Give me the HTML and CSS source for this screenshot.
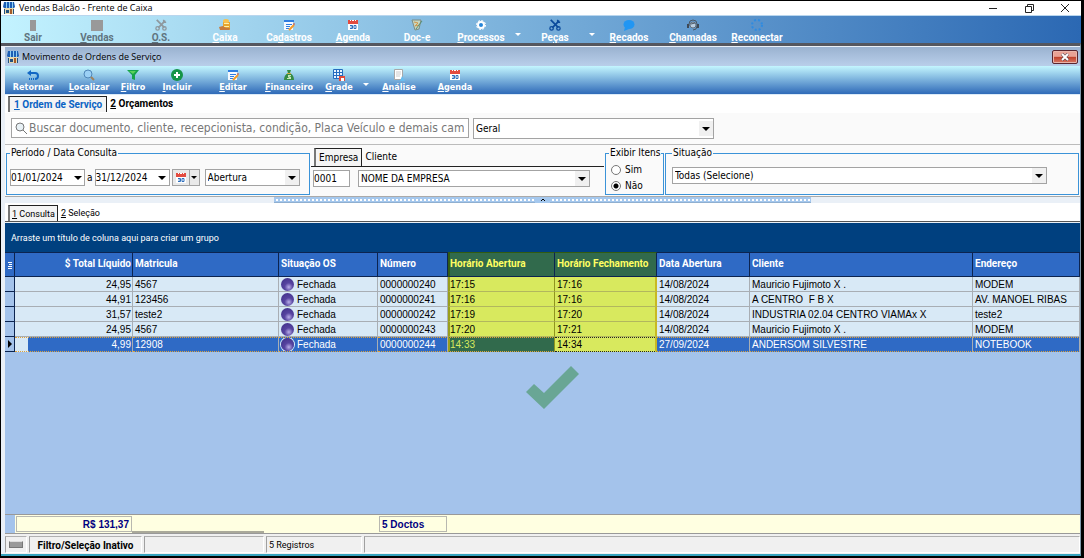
FILE: index.html
```html
<!DOCTYPE html>
<html lang="pt-br">
<head>
  <meta charset="UTF-8">
  <title>Vendas Balcão - Frente de Caixa</title>
  <link rel="stylesheet" href="styles.css">
</head>
<body>
  <svg class="symbols" aria-hidden="true">
    <symbol id="loja" viewBox="0 0 12 12">
      <path fill="#e8d9ae" d="M1 5h10v7H1z"/>
      <path fill="#1d5fb4" d="M1 0h10l1 5-1 1H1L0 5z"/>
      <path fill="#8fd0f5" d="M3 0h1v6H3zM6 0h1v6H6zM9 0h1v6H9z"/>
      <path fill="#23517f" d="M1 7h1v5H1zM10 7h1v5h-1zM3 8h3v3H3z"/>
      <path fill="#a55b2b" d="M7 7h2v5H7z"/>
    </symbol>
    <symbol id="agenda" viewBox="0 0 12 12">
      <path fill="#fff" d="M1 4h10v7H1z"/>
      <path fill="#e34b3f" d="M1 1h10v4H1z"/>
      <path fill="#fff" d="M3 1h1v1H3zM5 1h2v1H5zM8 1h1v1H8z"/>
      <path fill="none" stroke="#2e6fbd" d="M3 6.5h2.5v3H3M3.500 8h2M7 6.500h2v3H7z"/>
    </symbol>
    <symbol id="editar" viewBox="0 0 12 12">
      <path fill="#f5f9ff" d="M1 2h9v9H1z"/>
      <path fill="#2f7de0" d="M1 1h10v2H1zM3 5h6v1H3zM3 7h4v1H3zM3 9h3v1H3z"/>
      <path fill="none" stroke="#f39a28" stroke-width="2" d="M6 11l5-5"/>
      <path fill="#d8443a" d="M10 5l1-1 1 1-1 1z"/>
    </symbol>
    <symbol id="ferramentas" viewBox="0 0 14 14">
      <path fill="none" stroke="currentColor" stroke-width="2" d="M2 1l9 9M12 2l-8 8"/>
      <circle cx="3" cy="11" r="2" fill="none" stroke="currentColor" stroke-width="1.500"/>
      <circle cx="11" cy="11" r="2" fill="none" stroke="currentColor" stroke-width="1.500"/>
      <path fill="none" stroke="currentColor" stroke-width="1.500" d="M10 1v3h3"/>
    </symbol>
  </svg>

  <div class="janela">
    <header class="titulo">
      <svg class="icone"><use href="#loja"/></svg>
      <span>Vendas Balcão - Frente de Caixa</span>
      <div class="controles">
        <button aria-label="Minimizar"><svg viewBox="0 0 10 10"><path d="M1 5.500h8"/></svg></button>
        <button aria-label="Restaurar"><svg viewBox="0 0 10 10"><path d="M1.500 3.500h6v6h-6zM3.500 3V1.500h6v6H8"/></svg></button>
        <button aria-label="Fechar"><svg viewBox="0 0 10 10"><path d="M1 1l8 8M9 1L1 9"/></svg></button>
      </div>
    </header>

    <nav class="menu">
      <button class="apagado"><svg class="icone" viewBox="0 0 12 12"><path fill="#999" d="M3 1h6v11H3z"/></svg><span>Sair</span></button>
      <button class="apagado"><svg class="icone" viewBox="0 0 12 12"><path fill="#999" d="M0 1h12v11H0z"/></svg><span><u>V</u>endas</span></button>
      <button class="apagado"><svg class="icone cinza"><use href="#ferramentas"/></svg><span><u>O</u>.S.</span></button>
      <button><svg class="icone" viewBox="0 0 12 12"><path fill="#e6a52c" d="M4 3h7v8H4z"/><ellipse cx="7" cy="2" rx="3" ry="2" fill="#f7c04c"/><path fill="#fff0a8" d="M5 4h5v1H5zM5 7h5v1H5z"/><path fill="#c77b3b" d="M0 8l4-1 3 2h4l-1 2H1z"/></svg><span><u>C</u>aixa</span></button>
      <button><svg class="icone"><use href="#editar"/></svg><span>Ca<u>d</u>astros</span></button>
      <button><svg class="icone"><use href="#agenda"/></svg><span><u>A</u>genda</span></button>
      <button><svg class="icone" viewBox="0 0 12 12"><path fill="#c8d6c0" stroke="#7d8d84" d="M1 1h9l-2 9-4 1z"/><path fill="none" stroke="#d09849" d="M3 3l4 1-3 3 4-1"/><path fill="none" stroke="#568f70" d="M5 10l6-8"/></svg><span>Doc-e</span></button>
      <button><svg class="icone" viewBox="0 0 12 12"><circle cx="6" cy="6" r="3" fill="#2685d8" stroke="#fff" stroke-width="2"/><circle cx="6" cy="6" r="4.500" fill="none" stroke="#fff" stroke-dasharray="2 1.500"/></svg><span><u>P</u>rocessos</span></button>
      <button class="seta" aria-label="Mais processos"></button>
      <button><svg class="icone azul"><use href="#ferramentas"/></svg><span>Pe<u>ç</u>as</span></button>
      <button class="seta" aria-label="Mais peças"></button>
      <button><svg class="icone" viewBox="0 0 12 12"><ellipse cx="6" cy="5.500" rx="5.500" ry="4.500" fill="#2196f3"/><path fill="#2196f3" d="M2 8l-1 4 5-2z"/></svg><span><u>R</u>ecados</span></button>
      <button><svg class="icone" viewBox="0 0 12 12"><path fill="none" stroke="#4b5662" d="M2 7V5q0-4 4-4t4 4v2q0 4-4 4"/><path fill="#3e4955" d="M0 5h2v4H0zM10 5h2v4h-2z"/><circle cx="6" cy="6" r="3" fill="#b9cee2" stroke="#66727f"/><path stroke="#4b5662" d="M4 5l4-1"/></svg><span><u>C</u>hamadas</span></button>
      <button><svg class="icone" viewBox="0 0 12 12"><circle cx="6" cy="6" r="5" fill="none" stroke="#2f8be0" stroke-width="2" stroke-dasharray="2 2"/></svg><span><u>R</u>econectar</span></button>
    </nav>

    <main class="filha">
      <header class="titulo-filha">
        <svg class="icone"><use href="#loja"/></svg>
        <span>Movimento de Ordens de Serviço</span>
        <button class="fechar" aria-label="Fechar movimento"><svg viewBox="0 0 8 8"><path stroke="#4b3a46" stroke-width="3" d="M1 1l6 6M7 1L1 7"/><path stroke="#fff" stroke-width="2" d="M1 1l6 6M7 1L1 7"/></svg></button>
      </header>

      <nav class="acoes">
        <button><svg class="icone" viewBox="0 0 12 12"><path fill="none" stroke="#1267c4" stroke-width="2" d="M2 4h6q3 0 3 3t-3 3"/><path fill="#1267c4" d="M0 4l4-3v6z"/><path stroke="#1267c4" stroke-width="2" stroke-dasharray="1 1" d="M2 10h6"/></svg><span>Retornar</span></button>
        <button><svg class="icone" viewBox="0 0 12 12"><circle cx="5" cy="5" r="4" fill="#9bd0f5" stroke="#4f86b8"/><path stroke="#a0825c" stroke-width="2" d="M8 8l3 3"/></svg><span><u>L</u>ocalizar</span></button>
        <button class="curto"><svg class="icone" viewBox="0 0 12 12"><path fill="#16a34b" d="M0 1h12L8 6v5l-3-1V6z"/><path fill="#5bd15b" d="M2 2h7L6 5z"/></svg><span><u>F</u>iltro</span></button>
        <button><svg class="icone" viewBox="0 0 12 12"><circle cx="6" cy="6" r="6" fill="#159447"/><path fill="#fff" d="M5 3h2v2h2v2H7v2H5V7H3V5h2z"/></svg><span><u>I</u>ncluir</span></button>
        <button><svg class="icone"><use href="#editar"/></svg><span><u>E</u>ditar</span></button>
        <button><svg class="icone" viewBox="0 0 12 12"><path fill="#348b45" d="M4 1h4L7 4q4 2 4 7H1q0-5 4-7z"/><path fill="#d5a842" d="M4 4h4v1H4z"/><path fill="#c8e8ba" d="M5 6h3v1H6l2 1v2H4V9h2L5 8z"/></svg><span><u>F</u>inanceiro</span></button>
        <button class="medio"><svg class="icone" viewBox="0 0 12 12"><path fill="#e8f4ff" stroke="#246cc0" d="M.5.500h9v9h-9zM3.500.500v9M6.500.500v9M0 3.500h9M0 6.500h9"/><path fill="#e24c3b" d="M6 7h6v5H6z"/><path fill="#fff" d="M8 9h3v3H8z"/></svg><span><u>G</u>rade</span></button>
        <button class="seta" aria-label="Mais opções de grade"></button>
        <button><svg class="icone" viewBox="0 0 12 12"><path fill="#fff" stroke="#a8a8a8" d="M1.500.500h8v10h-8z"/><path stroke="#ccc" d="M3 3h5M3 5h5M3 7h4"/><path fill="#67bdf0" d="M9 7l3 5H7z"/></svg><span><u>A</u>nálise</span></button>
        <button><svg class="icone"><use href="#agenda"/></svg><span><u>A</u>genda</span></button>
      </nav>

      <div class="abas principais">
        <button class="aba ativa"><u>1</u> Ordem de Serviço</button>
        <button class="aba"><u>2</u> Orçamentos</button>
      </div>

      <section class="busca">
        <label class="campo-busca">
          <svg viewBox="0 0 12 12"><circle cx="5" cy="5" r="4"/><path d="M8 8l4 4"/></svg>
          <input type="text" aria-label="Buscar" placeholder="Buscar documento, cliente, recepcionista, condição, Placa Veículo e demais campos">
        </label>
        <select class="combo tipo" aria-label="Tipo de busca"><option>Geral</option></select>
      </section>

      <section class="filtros">
        <fieldset>
          <legend>Período / Data Consulta</legend>
          <div class="linha">
            <div class="data"><input type="text" aria-label="Data inicial" value="01/01/2024"><button class="abrir" aria-label="Abrir data inicial"></button></div>
            <span>a</span>
            <div class="data"><input type="text" aria-label="Data final" value="31/12/2024"><button class="abrir" aria-label="Abrir data final"></button></div>
            <div class="calendario"><button aria-label="Calendário"><svg class="icone"><use href="#agenda"/></svg></button><button class="abrir" aria-label="Períodos"></button></div>
            <select class="combo abertura" aria-label="Tipo de data"><option>Abertura</option></select>
          </div>
        </fieldset>

        <div class="empresa">
          <div class="abas">
            <button class="aba ativa">Empresa</button>
            <button class="aba">Cliente</button>
          </div>
          <div class="linha">
            <input type="text" class="codigo" aria-label="Código da empresa" value="0001">
            <select class="combo nome" aria-label="Empresa"><option>NOME DA EMPRESA</option></select>
          </div>
        </div>

        <fieldset class="exibir">
          <legend>Exibir Itens</legend>
          <label><input type="radio" name="itens"> Sim</label>
          <label><input type="radio" name="itens" checked> Não</label>
        </fieldset>

        <fieldset class="situacao">
          <legend>Situação</legend>
          <select class="combo" aria-label="Situação"><option>Todas (Selecione)</option></select>
        </fieldset>
      </section>

      <div class="divisor"><button aria-label="Recolher filtros"><svg viewBox="0 0 6 4"><path d="M1 3l2-2 2 2"/></svg></button></div>

      <div class="abas consulta">
        <button class="aba ativa"><u>1</u> Consulta</button>
        <button class="aba"><u>2</u> Seleção</button>
      </div>

      <section class="grade">
        <div class="agrupar">Arraste um título de coluna aqui para criar um grupo</div>
        <table>
          <colgroup>
            <col class="c-ind"><col class="c-total"><col class="c-mat"><col class="c-sit"><col class="c-num">
            <col class="c-hab"><col class="c-hfe"><col class="c-data"><col class="c-cli"><col>
          </colgroup>
          <thead>
            <tr>
              <th class="ind"><svg viewBox="0 0 6 8"><path d="M1 1.500h4M2 3.500h3M1 5.500h4M1 7.500h4"/></svg></th>
              <th class="valor">$ Total Líquido</th>
              <th>Matricula</th>
              <th>Situação OS</th>
              <th>Número</th>
              <th class="hora h-ini">Horário Abertura</th>
              <th class="hora h-fim">Horário Fechamento</th>
              <th>Data Abertura</th>
              <th>Cliente</th>
              <th>Endereço</th>
            </tr>
          </thead>
          <tbody>
            <tr><td class="ind"></td><td class="valor">24,95</td><td>4567</td><td><i class="bola"></i>Fechada</td><td>0000000240</td><td class="hora h-ini">17:15</td><td class="hora h-fim">17:16</td><td>14/08/2024</td><td>Mauricio Fujimoto X .</td><td>MODEM</td></tr>
            <tr><td class="ind"></td><td class="valor">44,91</td><td>123456</td><td><i class="bola"></i>Fechada</td><td>0000000241</td><td class="hora h-ini">17:16</td><td class="hora h-fim">17:16</td><td>14/08/2024</td><td>A CENTRO &nbsp;F B X</td><td>AV. MANOEL RIBAS</td></tr>
            <tr><td class="ind"></td><td class="valor">31,57</td><td>teste2</td><td><i class="bola"></i>Fechada</td><td>0000000242</td><td class="hora h-ini">17:19</td><td class="hora h-fim">17:20</td><td>14/08/2024</td><td>INDUSTRIA 02.04 CENTRO VIAMAx X</td><td>teste2</td></tr>
            <tr><td class="ind"></td><td class="valor">24,95</td><td>4567</td><td><i class="bola"></i>Fechada</td><td>0000000243</td><td class="hora h-ini">17:20</td><td class="hora h-fim">17:21</td><td>14/08/2024</td><td>Mauricio Fujimoto X .</td><td>MODEM</td></tr>
            <tr class="selecionada"><td class="ind"><svg viewBox="0 0 4 8"><path d="M0 0l4 4-4 4z"/></svg></td><td class="valor">4,99</td><td>12908</td><td><i class="bola"></i>Fechada</td><td>0000000244</td><td class="hora h-ini">14:33</td><td class="hora h-fim foco">14:34</td><td>27/09/2024</td><td>ANDERSOM SILVESTRE</td><td>NOTEBOOK</td></tr>
          </tbody>
        </table>
        <div class="vazio">
          <svg class="visto" viewBox="0 0 54 44"><path d="M0 26l8-8 10 9L45 0l8 8-35 35z"/></svg>
        </div>
        <div class="rodape">
          <div class="total">R$ 131,37</div>
          <div class="espaco"></div>
          <div class="doctos">5 Doctos</div>
        </div>
      </section>

      <footer class="status">
        <div class="led"><i></i></div>
        <div class="inativo">Filtro/Seleção Inativo</div>
        <div class="livre"></div>
        <div class="registros">5 Registros</div>
        <div class="resto"></div>
      </footer>
    </main>
  </div>
</body>
</html>
```

FILE: styles.css
```css
* { box-sizing: border-box; }
body { margin: 0; background: #000; color: #000; font: 10px/14px "DejaVu Sans Condensed", "DejaVu Sans", sans-serif; }
button, input, select { margin: 0; padding: 0; border: 0; border-radius: 0; font: inherit; color: inherit; }
button { background: none; white-space: nowrap; }
svg { display: block; }
.symbols { position: absolute; width: 0; height: 0; }
.icone { width: 12px; height: 12px; flex: none; }

.janela { display: flex; flex-direction: column; min-height: 100vh; padding: 1px 3px 2px 1px; }

.titulo { display: flex; align-items: center; gap: 4px; height: 14px; padding-left: 2px; background: #fff; font: 9px/12px "Open Sans", sans-serif; white-space: nowrap; overflow: hidden; }
.controles { display: flex; gap: 26px; margin-left: auto; padding-right: 11px; }
.controles svg { width: 10px; height: 10px; fill: none; stroke: #222; }

/* barra principal */
.menu { display: flex; height: 28px; border-top: 1px solid #b9d6ee; background: linear-gradient(90deg, #c3f3ff, #2b68b3); color: #fff; font: bold 10px/12px "Roboto", sans-serif; }
.menu button { display: flex; flex-direction: column; align-items: center; width: 64px; padding-top: 3px; }
.menu .icone { margin-bottom: 1px; }
.menu .apagado { color: #5f7480; }
.cinza { color: #8e989e; }
.azul { color: #0b4a9c; }
.menu .seta, .acoes .seta { width: 10px; padding-top: 17px; }
.seta::before { content: ""; border: 3px solid transparent; border-top-color: #fff; }

.filha { flex: 1; display: flex; flex-direction: column; padding-left: 4px; background: #eaf0f7; border-top: 3px solid #55575f; border-right: 1px solid #8199ad; border-bottom: 2px solid #36a3bd; }
.titulo-filha { display: flex; align-items: center; gap: 3px; height: 19px; margin-top: 1px; padding: 0 2px; background: linear-gradient(#9ab2d0, #b9cfea); font: 9px/12px "Open Sans", sans-serif; }
.fechar { display: flex; align-items: center; justify-content: center; width: 26px; height: 14px; margin-left: auto; border: 1px solid #5a2630; border-radius: 2px; background: linear-gradient(#e9a295 45%, #bf3f29 50%, #d77a65); box-shadow: inset 0 0 0 1px #e9b5aa; }
.fechar svg { width: 8px; height: 8px; }

.acoes { display: flex; height: 29px; border-bottom: 1px solid #dcebf8; background: linear-gradient(#c4f6ff, #2f6ab8); color: #fff; font-size: 9px; line-height: 12px; font-weight: bold; }
.acoes button { display: flex; flex-direction: column; align-items: center; width: 56px; padding-top: 3px; }
.acoes .curto { width: 32px; }
.acoes .medio { width: 44px; }

.abas { display: flex; align-items: flex-end; }
.aba { height: 16px; padding: 0 3px; }
.aba.ativa { border: 1px solid #222; border-bottom: 0; border-left: 2px solid #777; background: #f4f4f4; }
.principais { height: 18px; padding: 0 3px 1px; background: #fff; font: bold 10px/14px "Roboto", sans-serif; }
.principais .ativa { padding: 0 4px; color: #0a63c4; }

.busca { display: flex; gap: 4px; height: 32px; padding: 5px 6px; border-bottom: 1px solid #bbb; background: #fafafa; }
.campo-busca { display: flex; align-items: center; gap: 2px; width: 458px; height: 20px; border: 1px solid #a3a3a3; background: #fff; padding: 0 4px 0 3px; }
.campo-busca svg { width: 12px; height: 12px; fill: #e8f1f6; stroke: #777; flex: none; }
.campo-busca input { flex: 1; min-width: 0; height: 18px; background: none; font-size: 12px; }
.campo-busca input::placeholder { color: #777; opacity: 1; }

.combo { appearance: none; height: 17px; padding: 0 18px 0 2px; border: 1px solid #a3a3a3; background: #fff url("data:image/svg+xml,%3Csvg xmlns='http://www.w3.org/2000/svg' width='14' height='15'%3E%3Cpath fill='%23f0f0f0' d='M0 0h14v15H0z'/%3E%3Cpath d='M3 6h8l-4 4z'/%3E%3C/svg%3E") no-repeat right center; }
.tipo { width: 241px; height: 21px; }

.filtros { display: grid; grid-template-columns: 304px 293px 59px 1fr; grid-template-rows: minmax(0, 1fr); gap: 1px; height: 52px; padding: 2px 1px 1px; border-bottom: 1px solid #aaa; background: #fafafa; }
fieldset { min-width: 0; margin: 0; padding: 10px 3px 0; border: 1px solid #3b93d8; }
legend { padding: 0 1px; line-height: 12px; white-space: nowrap; }
.linha { display: flex; align-items: center; gap: 2px; }
.data { display: flex; width: 75px; height: 17px; border: 1px solid #a3a3a3; background: #fff; }
.data input { flex: 1; min-width: 0; background: none; }
.abrir { display: flex; align-items: center; justify-content: center; width: 13px; }
.abrir::before { content: ""; border: 4px solid transparent; border-top-color: #000; border-bottom: 0; }
.calendario { display: flex; height: 17px; border: 1px solid #a3a3a3; background: #e9e9e9; }
.calendario button { padding: 0 2px; }
.calendario .abrir { width: 10px; padding: 0; border-left: 1px solid #a3a3a3; }
.calendario .abrir::before { border-width: 3px; border-bottom: 0; }
.abertura { width: 95px; margin-left: 3px; }
.empresa .abas { padding: 1px 0 0 3px; border-bottom: 1px solid #222; }
.empresa .aba { height: 18px; }
.empresa .linha { gap: 8px; padding: 3px 2px 0; }
.codigo { width: 37px; height: 17px; border: 1px solid #a3a3a3; background: #fff; }
.nome { width: 232px; }
.exibir { padding-top: 3px; }
.exibir label { display: flex; align-items: center; gap: 4px; height: 16px; }
.exibir input { appearance: none; width: 10px; height: 10px; margin-left: 2px; border: 1px solid #777; border-radius: 50%; background: #fff; }
.exibir input:checked { background: radial-gradient(#000 2px, #fff 3px); }
.situacao { padding: 8px 31px 0 6px; }
.situacao .combo { width: 100%; }

.divisor { display: flex; justify-content: center; height: 6px; margin: 0 25%; border-bottom: 1px solid #8fafd0; background: linear-gradient(#a5c8ee 2px, transparent 2px 4px, #a5c8ee 4px), repeating-linear-gradient(90deg, #a5c8ee 0 2px, #fff 2px 4px); }
.divisor button { width: 15px; height: 6px; background: #a5c8ee; }
.divisor svg { width: 6px; height: 4px; margin: 0 auto; fill: none; stroke: #000; }
.consulta { height: 19px; padding-left: 3px; border-bottom: 1px solid #555; background: #fff; font: 9px/14px "Roboto", sans-serif; }
.consulta .ativa { padding: 0 2px; }

.grade { flex: 1; display: flex; flex-direction: column; margin-top: 1px; background: #a4c3eb; }
.agrupar { height: 29px; padding: 8px 6px; background: #00407f; color: #fff; font: 9px/14px "Roboto", sans-serif; }
table { width: 100%; table-layout: fixed; border-collapse: separate; border-spacing: 0; font: 10px/13px "Liberation Sans", sans-serif; }
.c-ind { width: 10px; }
.c-total { width: 118px; }
.c-mat { width: 146px; }
.c-sit { width: 99px; }
.c-num { width: 70px; }
.c-hab { width: 107px; }
.c-hfe { width: 102px; }
.c-data { width: 93px; }
.c-cli { width: 223px; }
th, td { padding: 0 1px 0 2px; text-align: left; white-space: nowrap; overflow: hidden; }
th { height: 25px; padding-bottom: 2px; border: solid #0c2450; border-width: 1px 1px 1px 0; background: #2f6ac5; color: #fff; font-family: "Roboto", sans-serif; }
td { height: 15px; border: solid #a8aeb4; border-width: 0 1px 1px 0; background: #d8e9f6; }
.ind { padding: 0; border-color: #0c2450; background: #a4c3eb; }
th.ind { background: #2f6ac5; }
.ind svg { width: 4px; height: 8px; margin: 0 auto; }
th.ind svg { width: 6px; fill: none; stroke: #fff; }
.valor { text-align: right; }
th.hora { background: #316a4c; color: #ffff62; border-top-color: #315b12; }
td.hora { background: #d8e95e; border-bottom-color: #b2b75e; border-right-color: #8f941f; }
.h-ini { padding-left: 0; border-left: 2px solid #9a9f1b; }
th.h-ini { border-left-color: #315b12; }
td.h-fim { border-right: 2px solid #c8b922; }
.bola { display: inline-block; width: 13px; height: 13px; margin: 0 3px 0 0; border-radius: 50%; background: radial-gradient(circle at 60% 70%, #b9aee8, #5744a0 35%, #3c2d85); vertical-align: top; }
.selecionada td { border-top: 1px dotted #e0a23c; border-bottom: 1px dotted #e0a23c; background: #2f6ac5; color: #fff; }
.selecionada .bola { box-shadow: 0 0 0 1px #d8e9f6; }
.selecionada td.ind { border-top: 0; border-bottom: 1px solid #0c2450; background: #a4c3eb; }
.selecionada td.valor { background: linear-gradient(90deg, #d8e9f6 13px, #2f6ac5 13px); }
.selecionada td.h-ini { background: #316a4c; color: #d8e95e; }
.selecionada td.foco { border-top-color: #222; border-bottom-color: #222; background: #d8e95e; color: #000; }

.vazio { flex: 1; padding: 14px 0 0 21px; }
.visto { width: 54px; height: 44px; margin: 0 auto; fill: #69a695; }
.rodape { display: flex; height: 20px; padding-top: 1px; border: solid #999; border-width: 1px 0; background: linear-gradient(90deg, #a4c3eb 10px, #ffffe1 10px); color: #000080; font: bold 10px/14px "Liberation Sans", sans-serif; }
.total, .doctos { height: 16px; border: 1px solid #b8b8b0; padding: 1px 2px 0; }
.total { width: 116px; margin-left: 11px; text-align: right; }
.espaco { width: 132px; height: 17px; border-bottom: 2px solid #aaa99a; margin-right: 115px; }
.doctos { width: 68px; }

.status { display: flex; gap: 2px; height: 20px; padding: 2px 0 1px; background: #f0f0f0; white-space: nowrap; }
.status div { padding: 1px 2px; border: 1px solid #fff; border-top-color: #b0b0b0; border-left-color: #a0a0a0; font: 9px/15px "Roboto", sans-serif; }
.status .led { width: 22px; padding: 4px 3px; }
.led i { display: block; width: 14px; height: 7px; border: 1px solid #777; border-top-color: #ddd; background: #999; }
.status .inativo { width: 113px; font-weight: bold; text-align: center; font-size: 10px; }
.livre { width: 120px; }
.registros { width: 96px; }
.resto { flex: 1; }
```
